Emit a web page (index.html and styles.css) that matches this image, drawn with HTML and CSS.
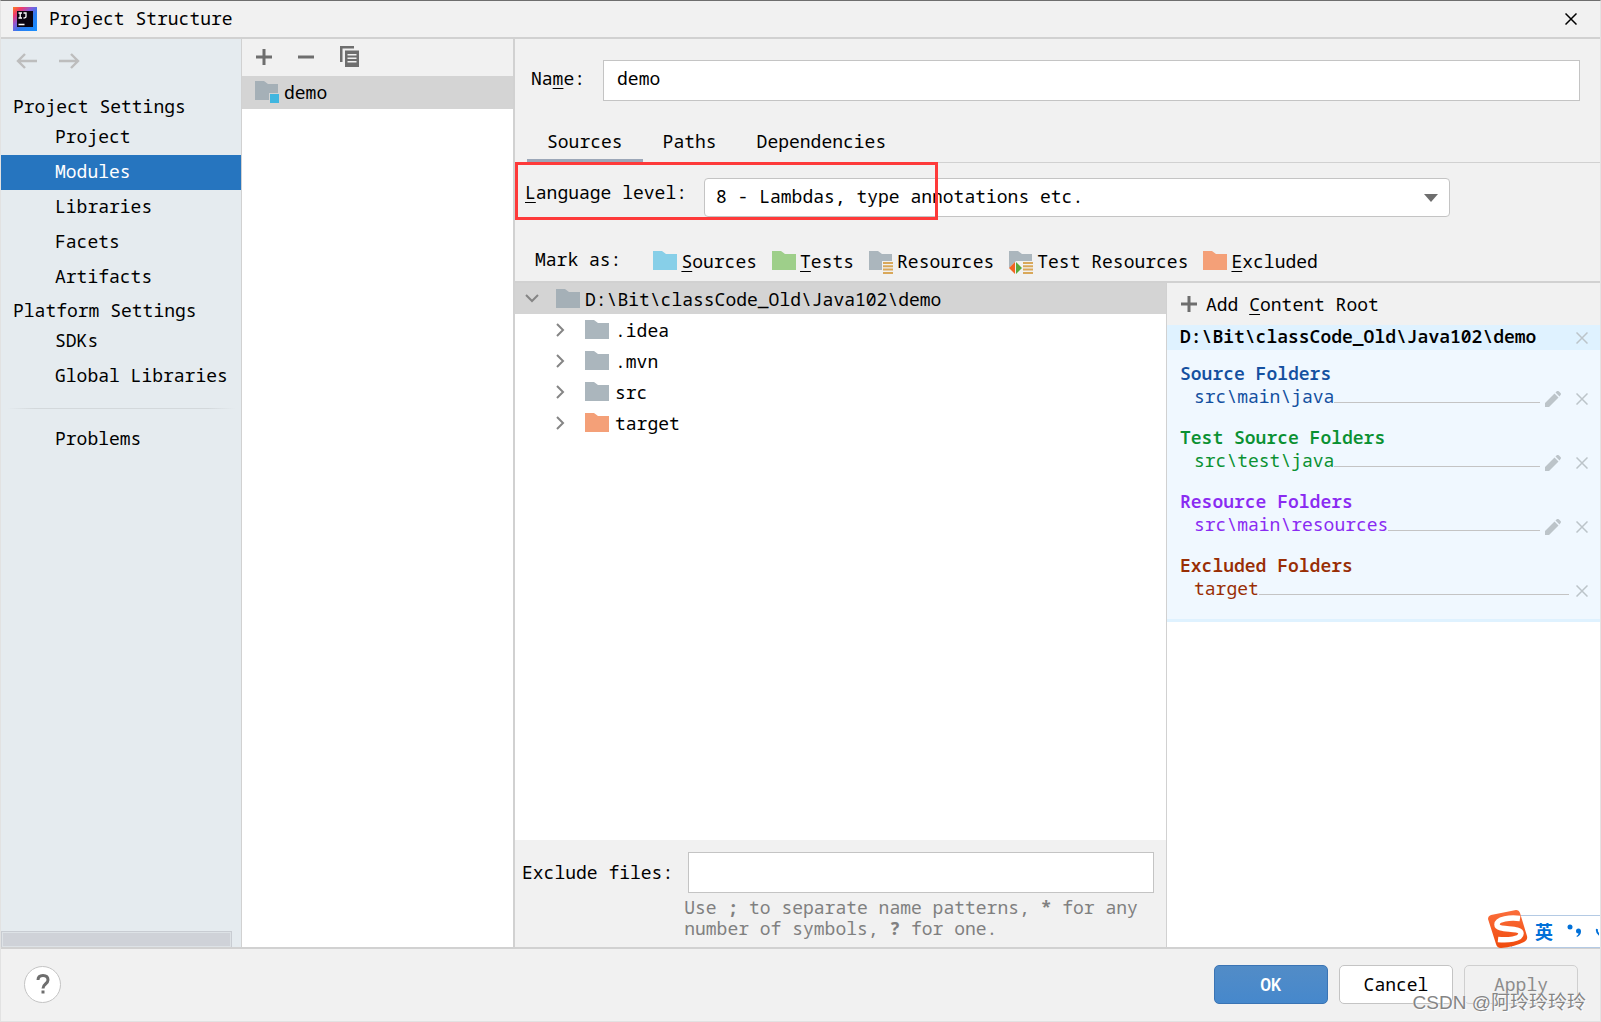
FILE: index.html
```html
<!DOCTYPE html>
<html lang="en">
<head>
<meta charset="utf-8">
<title>Project Structure</title>
<link rel="stylesheet" href="styles.css">
</head>
<body>
<svg class="defs" aria-hidden="true">
  <symbol id="folder" viewBox="0 0 24 19"><path d="M0 0h9l4 3h11v16H0z"/></symbol>
  <symbol id="plus" viewBox="0 0 16 16"><path d="M6.500 0h3v6.500H16v3H9.500V16h-3V9.500H0v-3h6.500z"/></symbol>
  <symbol id="close" viewBox="0 0 12 12"><path d="M.5.5l11 11M11.500.5l-11 11" fill="none" stroke="currentColor" stroke-width="1.500"/></symbol>
  <symbol id="pencil" viewBox="0 0 16 16"><path d="M0 16v-4L9.500 2.500l4 4L4 16zM10.500 1.500L12 0q1-.5 2 .5L15.500 2q1 1 0 2l-1 1.500z"/></symbol>
  <symbol id="chevron" viewBox="0 0 9 14"><path d="M1 1l6 6-6 6" fill="none" stroke="currentColor" stroke-width="2"/></symbol>
  <symbol id="lines" viewBox="0 0 10 12"><path d="M0 0h10v2H0zM0 3.300h10v2H0zM0 6.600h10v2H0zM0 10h10v2H0z"/></symbol>
</svg>
<div class="window">
  <header class="titlebar">
    <svg class="logo" viewBox="0 0 24 24">
      <defs><linearGradient id="lg" x1="0" y1="0" x2="1" y2="1"><stop offset="0" stop-color="#fc801d"/><stop offset=".2" stop-color="#f0386b"/><stop offset=".4" stop-color="#8a5bd8"/><stop offset=".6" stop-color="#2b7cf0"/><stop offset="1" stop-color="#168fff"/></linearGradient></defs>
      <path d="M0 0h24v24H0z" fill="url(#lg)"/><path d="M4 4h16v16H4z" fill="#0a0410"/>
      <path d="M5.500 6h3.500M7.200 6v5M5.500 11h3.500M10.500 6h2.500v3.500q0 1.500-2.500 1.500M5.500 17.500h6" fill="none" stroke="#fff" stroke-width="1.300"/>
    </svg>
    <h1>Project Structure</h1>
    <button class="icon-btn window-close" aria-label="Close"><svg width="12" height="12"><use href="#close"/></svg></button>
  </header>

  <div class="body">
    <nav class="sidebar">
      <div class="history">
        <button class="icon-btn" aria-label="Back"><svg width="21" height="16" viewBox="0 0 21 16"><path d="M21 8H2M9 1L2 8l7 7" fill="none" stroke="currentColor" stroke-width="2.400"/></svg></button>
        <button class="icon-btn" aria-label="Forward"><svg width="21" height="16" viewBox="0 0 21 16"><path d="M0 8h19M12 1l7 7-7 7" fill="none" stroke="currentColor" stroke-width="2.400"/></svg></button>
      </div>
      <h2>Project Settings</h2>
      <a href="#">Project</a>
      <a href="#" class="active">Modules</a>
      <a href="#">Libraries</a>
      <a href="#">Facets</a>
      <a href="#">Artifacts</a>
      <h2>Platform Settings</h2>
      <a href="#">SDKs</a>
      <a href="#">Global Libraries</a>
      <hr>
      <a href="#">Problems</a>
      <div class="scrollbar"></div>
    </nav>

    <section class="modules">
      <div class="module-tools">
        <button class="icon-btn" aria-label="Add"><svg width="16" height="16"><use href="#plus"/></svg></button>
        <button class="icon-btn" aria-label="Remove"><svg width="16" height="16" viewBox="0 0 16 16"><path d="M0 6.500h16v3H0z"/></svg></button>
        <button class="icon-btn" aria-label="Copy"><svg width="19" height="21" viewBox="0 0 19 21"><path d="M0 0h14v2.500H2.500V16H0z"/><path fill-rule="evenodd" d="M5 4.500h14V21H5zM7.500 8v1.500h9V8zM7.500 11.500V13h9v-1.500zM7.500 15v1.500h9V15z"/></svg></button>
      </div>
      <a href="#" class="module">
        <svg width="24" height="23" viewBox="0 0 24 23"><path d="M0 0h9l4 3h10v16H0z" fill="#a5b0b7"/><path d="M14 12h10v11H14z" fill="#d4d4d4"/><path d="M15 13h9v9h-9z" fill="#40b6e0"/></svg>
        <span>demo</span></a>
    </section>

    <main class="editor">
      <div class="name-row">
        <label for="name">Na<u>m</u>e:</label>
        <input id="name" type="text" value="demo">
      </div>
      <div class="tabs">
        <button class="tab selected">Sources</button>
        <button class="tab">Paths</button>
        <button class="tab">Dependencies</button>
      </div>
      <div class="level-row">
        <label for="level"><u>L</u>anguage level:</label>
        <div class="select">
          <select id="level"><option>8 - Lambdas, type annotations etc.</option></select>
          <svg width="14" height="8" viewBox="0 0 14 8"><path d="M0 0h14L7 8z"/></svg>
        </div>
        <div class="highlight"></div>
      </div>
      <div class="mark-row">
        <span class="mark-label">Mark as:</span>
        <button><svg width="24" height="19" class="sky"><use href="#folder"/></svg><span><u>S</u>ources</span></button>
        <button><svg width="24" height="19" class="green"><use href="#folder"/></svg><span><u>T</u>ests</span></button>
        <button><svg width="24" height="23" viewBox="0 0 24 23" class="gray"><path d="M0 0h9l4 3h10v7H13v9H0z"/><use href="#lines" class="gold" x="14" y="11" width="10" height="12"/></svg><span>Resources</span></button>
        <button><svg width="24" height="23" viewBox="0 0 24 23" class="gray"><path d="M0 0h9l4 3h10v7H14L7 10l-7 7z"/><path d="M6 11v12l-6-6z" fill="#f26522"/><path d="M7 11v12l6-6z" fill="#59a83a"/><use href="#lines" class="gold" x="14" y="11" width="10" height="12"/></svg><span>Test Resources</span></button>
        <button><svg width="24" height="19" class="orange"><use href="#folder"/></svg><span><u>E</u>xcluded</span></button>
      </div>

      <div class="content">
        <div class="left">
          <ul class="tree">
            <li class="root"><svg class="open" width="14" height="9" viewBox="0 0 14 9"><path d="M1 1l6 6 6-6" fill="none" stroke="currentColor" stroke-width="2"/></svg><svg width="24" height="19" class="gray"><use href="#folder"/></svg>D:\Bit\classCode_Old\Java102\demo</li>
            <li><svg class="twist" width="9" height="14"><use href="#chevron"/></svg><svg width="24" height="19" class="gray"><use href="#folder"/></svg>.idea</li>
            <li><svg class="twist" width="9" height="14"><use href="#chevron"/></svg><svg width="24" height="19" class="gray"><use href="#folder"/></svg>.mvn</li>
            <li><svg class="twist" width="9" height="14"><use href="#chevron"/></svg><svg width="24" height="19" class="gray"><use href="#folder"/></svg>src</li>
            <li><svg class="twist" width="9" height="14"><use href="#chevron"/></svg><svg width="24" height="19" class="orange"><use href="#folder"/></svg>target</li>
          </ul>
          <div class="exclude">
            <label for="exclude">Exclude files:</label>
            <input id="exclude" type="text">
            <p>Use <b>;</b> to separate name patterns, <b>*</b> for any number of symbols, <b>?</b> for one.</p>
          </div>
        </div>

        <aside class="roots">
          <button class="add-root"><svg width="16" height="16"><use href="#plus"/></svg><span>Add <u>C</u>ontent Root</span></button>
          <div class="root-head"><strong>D:\Bit\classCode_Old\Java102\demo</strong><button class="icon-btn" aria-label="Remove root"><svg width="12" height="12"><use href="#close"/></svg></button></div>
          <div class="groups">
            <section class="group source">
              <h3>Source Folders</h3>
              <div class="path"><span>src\main\java</span><i></i><button class="icon-btn" aria-label="Edit"><svg width="16" height="16"><use href="#pencil"/></svg></button><button class="icon-btn" aria-label="Remove"><svg width="12" height="12"><use href="#close"/></svg></button></div>
            </section>
            <section class="group test">
              <h3>Test Source Folders</h3>
              <div class="path"><span>src\test\java</span><i></i><button class="icon-btn" aria-label="Edit"><svg width="16" height="16"><use href="#pencil"/></svg></button><button class="icon-btn" aria-label="Remove"><svg width="12" height="12"><use href="#close"/></svg></button></div>
            </section>
            <section class="group resource">
              <h3>Resource Folders</h3>
              <div class="path"><span>src\main\resources</span><i></i><button class="icon-btn" aria-label="Edit"><svg width="16" height="16"><use href="#pencil"/></svg></button><button class="icon-btn" aria-label="Remove"><svg width="12" height="12"><use href="#close"/></svg></button></div>
            </section>
            <section class="group excluded">
              <h3>Excluded Folders</h3>
              <div class="path"><span>target</span><i></i><button class="icon-btn" aria-label="Remove"><svg width="12" height="12"><use href="#close"/></svg></button></div>
            </section>
          </div>
        </aside>
      </div>
    </main>
  </div>

  <footer class="footer">
    <button class="help" aria-label="Help"><svg width="14" height="20" viewBox="0 0 14 20"><path d="M2 6q0-4.500 5-4.500t5 4.500q0 2-2.500 4T7 14.500" fill="none" stroke="#6e6e6e" stroke-width="3"/><path d="M5.500 16.500h3v3h-3z" fill="#6e6e6e"/></svg></button>
    <button class="btn primary">OK</button>
    <button class="btn">Cancel</button>
    <button class="btn" disabled>Apply</button>
  </footer>

  <div class="ime">
    <svg class="ime-logo" width="40" height="38" viewBox="0 0 40 38">
      <defs><linearGradient id="og" x1="0" y1="0" x2="0" y2="1"><stop offset="0" stop-color="#fb6e3c"/><stop offset="1" stop-color="#f04a0c"/></linearGradient></defs>
      <path d="M3 5L28 0q3 0 4 3l7 23q1 4-3 6-10 5-23 6-4 0-5-4L0 9q0-3 3-4z" fill="url(#og)"/>
      <path d="M32 8.500C22 7 9 9 9 14.500c0 7 24 2 24 9 0 6-14 7-23 6" fill="none" stroke="#fff" stroke-width="5.500"/>
    </svg>
    <span lang="zh">英</span>
    <svg width="32" height="18" viewBox="0 0 32 18"><circle cx="3" cy="5" r="2.500"/><path d="M9 9q0-2.500 2.500-2.500T14 9.500q0 3.500-4 5.500l-.5-1q2-1 2-2.500Q9 11.500 9 9z"/><path d="M30 7q-1 4 4 7" fill="none" stroke="#0070d8" stroke-width="2"/></svg>
  </div>
  <div class="watermark">CSDN @阿玲玲玲玲</div>
</div>
</body>
</html>
```
FILE: styles.css
```css
* { box-sizing: border-box; margin: 0; }

body {
  background: #f1f1f1;
  color: #000;
  font: 18px/24px "Noto Sans Mono", "Noto Mono", "Droid Sans Mono", "DejaVu Sans Mono", monospace;
}

svg { display: block; flex: none; fill: currentColor; }
.defs { position: absolute; width: 0; height: 0; }
button, input, select { font: inherit; color: inherit; border: 0; padding: 0; background: none; }
input { border: 1px solid #c4c4c4; background: #fff; min-width: 0; padding: 0 13px 5px; height: 41px; }
a { color: inherit; text-decoration: none; }
h1, h2 { font: inherit; }
h3 { font: inherit; font-weight: 600; }
u { text-decoration-thickness: 1px; text-underline-offset: 3px; }

.icon-btn { display: flex; align-items: center; justify-content: center; flex: none; }

.window {
  position: relative;
  display: flex;
  flex-direction: column;
  min-height: 100vh;
  overflow: hidden;
  border: 1px solid #e2e2e2;
  border-top-color: #6e6e6e;
}

/* Title bar */
.titlebar {
  display: flex;
  align-items: center;
  gap: 12px;
  height: 38px;
  padding: 0 23px 0 12px;
  border-bottom: 2px solid #d1d1d1;
}
.titlebar h1 { padding-bottom: 2px; }
.logo { width: 24px; height: 24px; }
.window-close { margin-left: auto; }

.body { display: flex; flex: 1; }

/* Navigation */
.sidebar {
  display: flex;
  flex-direction: column;
  width: 241px;
  flex: none;
  background: #e5ebef;
  border-right: 1px solid #d1d1d1;
}
.history { display: flex; gap: 22px; height: 52px; padding: 14px 0 0 15px; color: #bdbdbd; align-items: flex-start; }
.sidebar h2 { height: 29px; padding: 3px 0 0 12px; }
.sidebar a { height: 35px; padding: 4px 0 0 54px; }
.sidebar .active { background: #2675bf; color: #fff; }
.sidebar hr {
  height: 1px;
  margin: 14px 6px 13px;
  border: 0;
  background: linear-gradient(90deg, transparent, #d3d8db 12%, #d3d8db 88%, transparent);
}
.scrollbar {
  width: 231px;
  height: 16px;
  margin-top: auto;
  background: #cfd2d8;
  border: 1px solid #c8ccd2;
  border-bottom: 0;
  box-shadow: inset 0 0 0 1px #dde2e6;
}

/* Module list */
.modules { width: 273px; flex: none; background: #fff; border-right: 2px solid #d1d1d1; }
.module-tools {
  display: flex;
  gap: 26px;
  height: 37px;
  padding: 0 0 2px 14px;
  background: #f1f1f1;
  color: #6e6e6e;
}
.module { display: flex; align-items: center; gap: 5px; height: 33px; padding-left: 13px; background: #d4d4d4; }
.module span { padding-bottom: 2px; }

/* Editor */
.editor { display: flex; flex-direction: column; flex: 1; min-width: 0; }
.name-row { display: flex; align-items: center; gap: 18px; padding: 21px 20px 0 16px; }
.name-row label { padding-bottom: 5px; }
.name-row input { flex: 1; }
.tabs { display: flex; height: 62px; padding-left: 12px; border-bottom: 1px solid #d1d1d1; align-items: flex-end; }
.tab { height: 40px; padding: 0 20px; border-bottom: 3px solid transparent; }
.tab.selected { border-color: #9ca7b8; }
.level-row { position: relative; display: flex; gap: 17px; padding: 15px 150px 0 10px; }
.level-row label { padding-top: 2px; }
.select { position: relative; flex: 1; }
.select select {
  appearance: none;
  width: 100%;
  height: 39px;
  padding: 0 11px 3px;
  background: #fff;
  border: 1px solid #c4c4c4;
  border-radius: 4px;
}
.select svg { position: absolute; right: 12px; top: 16px; color: #6e6e6e; pointer-events: none; }
.highlight { position: absolute; left: 0; top: -1px; width: 423px; height: 58px; border: 3px solid #fe3a3a; pointer-events: none; }

.mark-row { display: flex; gap: 15px; height: 66px; padding: 30px 0 0 20px; border-bottom: 2px solid #d1d1d1; white-space: nowrap; }
.mark-label { margin-right: 17px; }
.mark-row button { display: flex; align-items: flex-start; gap: 4px; }
.mark-row button span { padding-top: 2px; }
.mark-row svg { margin-top: 4px; }

.sky { color: #87cfe8; }
.green { color: #9ecf8a; }
.gray { color: #abb6bd; }
.orange { color: #f4a078; }
.gold { color: #d9a85a; }

.content { display: flex; flex: 1; }
.left { display: flex; flex-direction: column; flex: 3; min-width: 0; border-right: 1px solid #d1d1d1; }
.tree { flex: 1; padding: 0; list-style: none; background: #fff; }
.tree li { display: flex; align-items: center; height: 31px; padding-left: 41px; gap: 6px; }
.tree .twist { margin-right: 14px; color: #858585; }
.tree .root { padding-left: 10px; gap: 5px; background: #d4d4d4; }
.tree .open { margin-right: 12px; color: #858585; }
.tree .root .gray { color: #a5b0b7; }

.exclude {
  display: grid;
  grid-template-columns: auto 1fr;
  align-items: center;
  column-gap: 15px;
  padding: 12px 12px 8px 7px;
}
.exclude label { padding-bottom: 2px; }
.exclude p { grid-column: 2; padding-top: 4px; margin: 0 -8px 0 -4px; line-height: 21px; color: #808080; }

/* Content roots */
.roots { width: 433px; flex: none; background: #fff; }
.add-root { display: flex; align-items: center; gap: 9px; height: 42px; padding-left: 14px; width: 100%; background: #f1f1f1; }
.add-root svg { color: #6e6e6e; }
.root-head { display: flex; align-items: center; justify-content: space-between; height: 25px; padding: 0 12px 0 13px; background: #dff2ff; }
.root-head strong { font-weight: 600; line-height: 20px; padding-bottom: 4px; }
.roots .icon-btn { color: #bcc4c9; }
.groups { padding: 11px 12px 11px 13px; background: #f0f8ff; border-bottom: 3px solid #dff2ff; height: 272px; }
.group { height: 64px; }
.path { display: flex; padding-left: 14px; line-height: 22px; }
.path i { flex: 1; height: 1px; margin: 17px 5px 0 0; background: #c4c4c4; }
.path .icon-btn { height: 28px; }
.path .icon-btn + .icon-btn { margin-left: 15px; }
.excluded i { margin-right: 7px; }
.source { color: #1450a0; }
.test { color: #0a9132; }
.resource { color: #8a2bf2; }
.excluded { color: #992e05; }

/* Buttons */
.footer { display: flex; align-items: center; gap: 11px; height: 74px; padding: 0 22px 2px 23px; border-top: 2px solid #d1d1d1; }
.help { display: grid; place-items: center; width: 37px; height: 37px; margin-right: auto; border: 1px solid #c4c4c4; border-radius: 50%; background: #fff; }
.btn { width: 114px; height: 39px; border: 1px solid #c4c4c4; border-radius: 5px; background: #fff; }
.primary { border-color: #3a74b4; background: linear-gradient(#528cc7, #4688cc); color: #fff; font-weight: 600; }
.btn:disabled { background: #f1f1f1; border-color: #cfcfcf; color: #8c8c8c; }

/* Input method bar floating over the dialog */
.ime {
  position: absolute;
  right: -1px;
  bottom: 73px;
  display: flex;
  align-items: center;
  gap: 14px;
  width: 90px;
  height: 33px;
  padding: 0 0 2px 23px;
  background: #fff;
  border: 1px solid #b4cae4;
  border-right: 0;
  color: #0070d8;
  font: bold 18px/24px "Noto Sans CJK SC", sans-serif;
}
.ime-logo { position: absolute; left: -24px; top: -6px; }
.watermark {
  position: absolute;
  right: 14px;
  bottom: 4px;
  color: #858585;
  font: 19px/28px "Liberation Sans", "Noto Sans CJK SC", sans-serif;
  text-shadow: 0 0 1px #fff, 1px 1px 1px #fff;
  pointer-events: none;
}
```
